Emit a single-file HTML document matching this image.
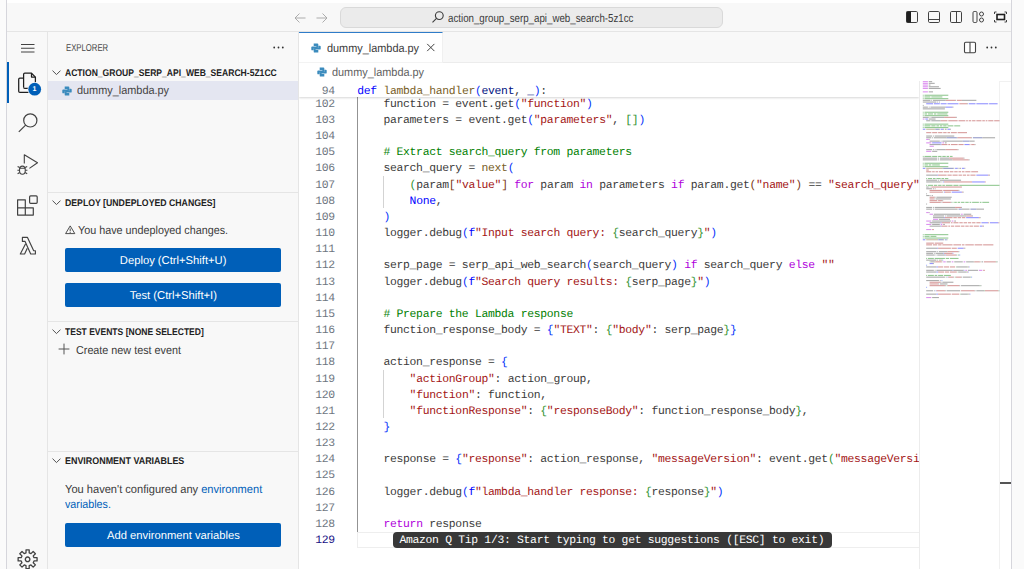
<!DOCTYPE html>
<html><head><meta charset="utf-8">
<style>
*{margin:0;padding:0;box-sizing:border-box}
html,body{width:1024px;height:569px;overflow:hidden;text-rendering:geometricPrecision;background:#f8f8f8;font-family:"Liberation Sans",sans-serif;color:#3b3b3b}
.a{position:absolute}
.t{position:absolute;white-space:pre;line-height:1}
.cl{position:absolute;left:357.3px;white-space:pre;font-family:"Liberation Mono",monospace;font-size:11.4px;letter-spacing:-0.3px;line-height:16.16px;height:16.16px;color:#3b3b3b}
.ln{position:absolute;left:300px;width:34.9px;text-align:right;white-space:pre;font-family:"Liberation Mono",monospace;font-size:11.4px;letter-spacing:-0.3px;line-height:16.16px}
.hdr{position:absolute;left:65.1px;font-weight:bold;font-size:9.7px;white-space:pre;line-height:1;transform-origin:0 0;color:#222}
.chev{position:absolute;left:52.3px;width:9px;height:5.4px;margin-top:-0.8px}
.btn{position:absolute;left:65.3px;width:216px;height:24px;background:#005fb8;border-radius:2px;color:#fff;font-size:11.4px;line-height:24px;text-align:center;white-space:pre}
.btn span{display:inline-block;transform:translateY(1.4px) scaleX(0.985)}
</style></head>
<body>
<!-- outer frame -->
<div class="a" style="left:0;top:0;width:6px;height:569px;background:#fbfbfb"></div>
<div class="a" style="left:6px;top:0;width:1px;height:569px;background:#d6d6dc"></div>
<div class="a" style="left:7px;top:0;width:1004px;height:3px;background:#ffffff"></div>
<div class="a" style="left:1011px;top:0;width:1px;height:569px;background:#d6d6dc"></div>
<div class="a" style="left:1012px;top:0;width:12px;height:569px;background:#fafafa"></div>

<!-- title bar -->
<div class="a" style="left:7px;top:3px;width:1004px;height:29.4px;background:#f8f8f8;border-bottom:1px solid #e5e5e5"></div>
<svg class="a" style="left:292px;top:11px" width="40" height="14" viewBox="0 0 40 14">
  <g fill="none" stroke="#a4a4a4" stroke-width="0.9">
    <path d="M3 7h10.5M3 7l4.5-4.5M3 7l4.5 4.5"/>
    <path d="M24.5 7h10.5M35 7l-4.5-4.5M35 7l-4.5 4.5"/>
  </g>
</svg>
<div class="a" style="left:339.6px;top:7.2px;width:383px;height:20.4px;background:#ebebeb;border:1px solid #d9d9d9;border-radius:6px"></div>
<svg class="a" style="left:431px;top:10px" width="14" height="14" viewBox="0 0 14 14">
  <g fill="none" stroke="#3b3b3b" stroke-width="1.1"><circle cx="8.3" cy="5.6" r="3.9"/><path d="M5.5 8.4L1.5 12.4"/></g>
</svg>
<div class="t" style="left:448px;top:12.7px;font-size:11.6px;color:#3b3b3b;transform:scaleX(0.839);transform-origin:0 0">action_group_serp_api_web_search-5z1cc</div>

<!-- layout icons -->
<svg class="a" style="left:904px;top:9.4px" width="106" height="16" viewBox="0 0 106 16">
  <g fill="none" stroke="#424242" stroke-width="1">
    <rect x="2.5" y="2.5" width="11" height="11" rx="1.2"/>
    <rect x="24.5" y="2.5" width="11" height="11" rx="1.2"/><path d="M24.5 10.5h11"/>
    <rect x="46.5" y="2.5" width="11" height="11" rx="1.2"/><path d="M52.5 2.5v11"/>
    <rect x="69" y="2.5" width="4" height="11" rx="1.2"/><circle cx="77.5" cy="5" r="2"/><circle cx="77.5" cy="11" r="2"/>
    <path d="M90.5 5V3h2M100.5 3h2v2M102.5 11v2h-2M92.5 13h-2v-2" />
  </g>
  <rect x="2.5" y="2.5" width="4.5" height="11" fill="#1f1f1f"/>
  <rect x="93" y="5.5" width="7.5" height="5" fill="none" stroke="#1f1f1f" stroke-width="1.6"/>
</svg>

<!-- activity bar -->
<div class="a" style="left:7px;top:32px;width:40px;height:537px;background:#f8f8f8"></div>
<div class="a" style="left:47px;top:32px;width:1px;height:537px;background:#e5e5e5"></div>
<div class="a" style="left:7px;top:62px;width:2px;height:41px;background:#005fb8"></div>
<svg class="a" style="left:7px;top:32px" width="40" height="537" viewBox="0 0 40 537">
  <g fill="none" stroke="#424242" stroke-width="1.1">
    <path d="M14 12.5h13.5M14 16.2h13.5M14 20h13.5"/>
  </g>
  <!-- files -->
  <g fill="none" stroke="#1f1f1f" stroke-width="1.25" stroke-linejoin="round">
    <path d="M16.6 55.2V42.4a1.2 1.2 0 0 1 1.2-1.2h6.7l3.9 3.9v10.5"/>
    <path d="M24.5 41.2v3.9h3.9"/>
    <path d="M16.6 46.1h-3.7a1.2 1.2 0 0 0-1.2 1.2v11.9a1.2 1.2 0 0 0 1.2 1.2h9.5"/>
    <path d="M16.6 55.2a1.2 1.2 0 0 0 1.2 1.2h4"/>
  </g>
  <circle cx="27.7" cy="57.2" r="7.2" fill="#f8f8f8"/>
  <circle cx="27.7" cy="57.2" r="6.4" fill="#005fb8"/>
  <!-- search -->
  <g fill="none" stroke="#424242" stroke-width="1.2">
    <circle cx="23.3" cy="88.4" r="6.6"/><path d="M18.6 93.1L11.8 99.9"/>
  </g>
  <!-- run debug -->
  <g fill="none" stroke="#424242" stroke-width="1.1" stroke-linejoin="round">
    <path d="M17.3 131.4V122.8L30.5 130.8L22.4 136.4"/>
    <ellipse cx="15.4" cy="138.2" rx="2.9" ry="4.1"/>
    <path d="M12.7 136.3H18.1M10.6 134.4L12.7 135.6M10.4 138.3H12.5M10.6 141.8L12.7 140.6M20.2 134.4L18.1 135.6M20.4 138.3H18.3M20.2 141.8L18.1 140.6"/>
  </g>
  <!-- extensions -->
  <g fill="none" stroke="#424242" stroke-width="1.2">
    <path d="M10.6 167.8h7.7v8h8v7.3H10.6z" stroke-linejoin="round"/>
    <path d="M10.6 175.8h7.7v7.3"/>
    <rect x="22.6" y="163.9" width="7.6" height="7.4" rx="1"/>
  </g>
  <!-- lambda -->
  <g fill="none" stroke="#424242" stroke-width="1.15" stroke-linejoin="round"><path d="M15.4 205.4H20.5L26.7 218.7H28.4V222H23.7L18.1 209.4H15.4Z"/><path d="M18.6 211.8L13.3 222H17.6L20.3 216.3"/></g>
  <!-- gear -->
  <g transform="translate(20.6 527.3)" fill="none" stroke="#424242" stroke-width="1.3" stroke-linejoin="round">
    <path d="M-1.59 -6.41 L-1.58 -9.47 L1.58 -9.47 L1.59 -6.41 L3.40 -5.65 L5.58 -7.81 L7.81 -5.58 L5.65 -3.40 L6.41 -1.59 L9.47 -1.58 L9.47 1.58 L6.41 1.59 L5.65 3.40 L7.81 5.58 L5.58 7.81 L3.40 5.65 L1.59 6.41 L1.58 9.47 L-1.58 9.47 L-1.59 6.41 L-3.40 5.65 L-5.58 7.81 L-7.81 5.58 L-5.65 3.40 L-6.41 1.59 L-9.47 1.58 L-9.47 -1.58 L-6.41 -1.59 L-5.65 -3.40 L-7.81 -5.58 L-5.58 -7.81 L-3.40 -5.65Z"/>
    <circle cx="0" cy="0" r="2.3"/>
  </g>
</svg>

<div class="t" style="left:32.4px;top:85.9px;font-size:7px;font-weight:bold;color:#fff">1</div>
<!-- sidebar -->
<div class="a" style="left:298px;top:32px;width:1px;height:537px;background:#e5e5e5"></div>
<div class="t" style="left:65.6px;top:44.1px;font-size:10px;transform:scaleX(0.775);transform-origin:0 0;color:#4a4a4a">EXPLORER</div>
<svg class="a" style="left:272px;top:45px" width="14" height="5"><g fill="#303030"><circle cx="2.2" cy="2.5" r="0.9"/><circle cx="6.5" cy="2.5" r="0.9"/><circle cx="10.8" cy="2.5" r="0.9"/></g></svg>
<svg class="chev" style="top:70.7px" viewBox="0 0 9 5.4"><path d="M0.5 0.6l4 4L8.5 0.6" fill="none" stroke="#505050" stroke-width="1"/></svg>
<div class="hdr" style="top:69.0px;transform:scaleX(0.884)">ACTION_GROUP_SERP_API_WEB_SEARCH-5Z1CC</div>
<div class="a" style="left:48px;top:80.8px;width:250px;height:19px;background:#e4e6f1"></div>
<svg class="a pyi" style="left:61.8px;top:85.6px" width="10" height="10" viewBox="0 0 10 10"><use href="#py"/></svg>
<div class="t" style="left:77.2px;top:85.0px;font-size:11.6px;transform:scaleX(0.94);transform-origin:0 0;color:#444">dummy_lambda.py</div>

<div class="a" style="left:48px;top:192px;width:250px;height:1px;background:#e5e5e5"></div>
<svg class="chev" style="top:200.7px" viewBox="0 0 9 5.4"><path d="M0.5 0.6l4 4L8.5 0.6" fill="none" stroke="#505050" stroke-width="1"/></svg>
<div class="hdr" style="top:198.8px;transform:scaleX(0.900)">DEPLOY [UNDEPLOYED CHANGES]</div>
<svg class="a" style="left:64.5px;top:225.2px" width="11" height="10" viewBox="0 0 11 10"><path d="M5.2 0.9L9.8 8.6H0.6z" fill="none" stroke="#3b3b3b" stroke-width="0.9" stroke-linejoin="round"/><path d="M5.2 3.5v2.8M5.2 7v0.9" stroke="#3b3b3b" stroke-width="0.9"/></svg>
<div class="t" style="left:78px;top:225.2px;font-size:11.6px;transform:scaleX(0.93);transform-origin:0 0">You have undeployed changes.</div>
<div class="btn" style="top:248px"><span>Deploy (Ctrl+Shift+U)</span></div>
<div class="btn" style="top:283px"><span>Test (Ctrl+Shift+I)</span></div>

<div class="a" style="left:48px;top:321px;width:250px;height:1px;background:#e5e5e5"></div>
<svg class="chev" style="top:330px" viewBox="0 0 9 5.4"><path d="M0.5 0.6l4 4L8.5 0.6" fill="none" stroke="#505050" stroke-width="1"/></svg>
<div class="hdr" style="top:327.9px;transform:scaleX(0.880)">TEST EVENTS [NONE SELECTED]</div>
<svg class="a" style="left:57.5px;top:343px" width="12" height="12" viewBox="0 0 12 12"><path d="M6 0.6v10.8M0.6 6h10.8" stroke="#555" stroke-width="1"/></svg>
<div class="t" style="left:76.4px;top:344.7px;font-size:11.6px;transform:scaleX(0.93);transform-origin:0 0">Create new test event</div>

<div class="a" style="left:48px;top:450.5px;width:250px;height:1px;background:#e5e5e5"></div>
<svg class="chev" style="top:459px" viewBox="0 0 9 5.4"><path d="M0.5 0.6l4 4L8.5 0.6" fill="none" stroke="#505050" stroke-width="1"/></svg>
<div class="hdr" style="top:456.9px;transform:scaleX(0.921)">ENVIRONMENT VARIABLES</div>
<div class="t" style="left:65.3px;top:483.6px;font-size:11.6px;transform:scaleX(0.957);transform-origin:0 0">You haven't configured any <span style="color:#005fb8">environment</span></div>
<div class="t" style="left:65.3px;top:498.8px;font-size:11.6px;transform:scaleX(0.925);transform-origin:0 0;color:#005fb8">variables.</div>
<div class="btn" style="top:522.5px"><span>Add environment variables</span></div>

<!-- editor -->
<div class="a" style="left:299px;top:32px;width:712px;height:537px;background:#ffffff"></div>
<div class="a" style="left:299px;top:32px;width:712px;height:30.8px;background:#f8f8f8;border-bottom:1px solid #ececec"></div>
<div class="a" style="left:299px;top:32.4px;width:143.5px;height:30.4px;background:#ffffff;border-top:1.6px solid #2f7cc9;border-right:1px solid #f0f0f0;border-bottom:1px solid #f3f3f3"></div>
<svg class="a" style="left:311px;top:43px" width="10" height="10" viewBox="0 0 10 10"><use href="#py"/></svg>
<div class="t" style="left:326.7px;top:42.8px;font-size:11.6px;transform:scaleX(0.94);transform-origin:0 0">dummy_lambda.py</div>
<svg class="a" style="left:426px;top:43px" width="10" height="9" viewBox="0 0 10 9"><path d="M1.2 0.9l7.2 7.2M8.4 0.9L1.2 8.1" stroke="#424242" stroke-width="1"/></svg>
<svg class="a" style="left:963px;top:41px" width="14" height="13" viewBox="0 0 14 13"><g fill="#fff" stroke="#424242" stroke-width="1.1"><rect x="1.5" y="1.2" width="11" height="10.6" rx="1.2"/><path d="M7 1.2v10.6"/></g></svg>
<svg class="a" style="left:985px;top:45px" width="14" height="5"><g fill="#303030"><circle cx="2.2" cy="2.5" r="0.9"/><circle cx="6.5" cy="2.5" r="0.9"/><circle cx="10.8" cy="2.5" r="0.9"/></g></svg>

<!-- breadcrumbs -->
<svg class="a" style="left:316.5px;top:67px" width="10" height="10" viewBox="0 0 10 10"><use href="#py"/></svg>
<div class="t" style="left:331.8px;top:67.1px;font-size:11.6px;transform:scaleX(0.94);transform-origin:0 0;color:#616161">dummy_lambda.py</div>

<!-- code area -->
<div class="a" style="left:299px;top:81px;width:620px;height:488px;overflow:hidden">
<div style="position:absolute;left:-299px;top:-81px;width:1024px;height:569px">
<!-- indent guides -->
<div class="a" style="left:357px;top:81px;width:1px;height:450.5px;background:#939393"></div>
<div class="a" style="left:383.3px;top:176px;width:1px;height:32.3px;background:#d3d3d3"></div>
<div class="a" style="left:383.3px;top:369.9px;width:1px;height:48.5px;background:#d3d3d3"></div>
<!-- current line -->
<div class="a" style="left:357px;top:532px;width:562px;height:15.5px;border-top:1.6px solid #eeeeee;border-bottom:1.6px solid #eeeeee;border-left:1.6px solid #eeeeee"></div>
<div class="ln" style="top:96.80px;color:#6e7681">102</div>
<div class="ln" style="top:112.96px;color:#6e7681">103</div>
<div class="ln" style="top:129.12px;color:#6e7681">104</div>
<div class="ln" style="top:145.28px;color:#6e7681">105</div>
<div class="ln" style="top:161.44px;color:#6e7681">106</div>
<div class="ln" style="top:177.60px;color:#6e7681">107</div>
<div class="ln" style="top:193.76px;color:#6e7681">108</div>
<div class="ln" style="top:209.92px;color:#6e7681">109</div>
<div class="ln" style="top:226.08px;color:#6e7681">110</div>
<div class="ln" style="top:242.24px;color:#6e7681">111</div>
<div class="ln" style="top:258.40px;color:#6e7681">112</div>
<div class="ln" style="top:274.56px;color:#6e7681">113</div>
<div class="ln" style="top:290.72px;color:#6e7681">114</div>
<div class="ln" style="top:306.88px;color:#6e7681">115</div>
<div class="ln" style="top:323.04px;color:#6e7681">116</div>
<div class="ln" style="top:339.20px;color:#6e7681">117</div>
<div class="ln" style="top:355.36px;color:#6e7681">118</div>
<div class="ln" style="top:371.52px;color:#6e7681">119</div>
<div class="ln" style="top:387.68px;color:#6e7681">120</div>
<div class="ln" style="top:403.84px;color:#6e7681">121</div>
<div class="ln" style="top:420.00px;color:#6e7681">122</div>
<div class="ln" style="top:436.16px;color:#6e7681">123</div>
<div class="ln" style="top:452.32px;color:#6e7681">124</div>
<div class="ln" style="top:468.48px;color:#6e7681">125</div>
<div class="ln" style="top:484.64px;color:#6e7681">126</div>
<div class="ln" style="top:500.80px;color:#6e7681">127</div>
<div class="ln" style="top:516.96px;color:#6e7681">128</div>
<div class="ln" style="top:533.12px;color:#171184">129</div>
<div class="cl" style="top:96.80px"><span style="color:#3b3b3b">    function = event.get</span><span style="color:#0431fa">(</span><span style="color:#a31515">&quot;function&quot;</span><span style="color:#0431fa">)</span></div>
<div class="cl" style="top:112.96px"><span style="color:#3b3b3b">    parameters = event.get</span><span style="color:#0431fa">(</span><span style="color:#a31515">&quot;parameters&quot;</span><span style="color:#3b3b3b">, </span><span style="color:#319331">[]</span><span style="color:#0431fa">)</span></div>
<div class="cl" style="top:129.12px"></div>
<div class="cl" style="top:145.28px"><span style="color:#008000">    # Extract search_query from parameters</span></div>
<div class="cl" style="top:161.44px"><span style="color:#3b3b3b">    search_query = </span><span style="color:#795e26">next</span><span style="color:#0431fa">(</span></div>
<div class="cl" style="top:177.60px"><span style="color:#3b3b3b">        </span><span style="color:#319331">(</span><span style="color:#3b3b3b">param</span><span style="color:#7b3814">[</span><span style="color:#a31515">&quot;value&quot;</span><span style="color:#7b3814">]</span><span style="color:#3b3b3b"> </span><span style="color:#af00db">for</span><span style="color:#3b3b3b"> param </span><span style="color:#af00db">in</span><span style="color:#3b3b3b"> parameters </span><span style="color:#af00db">if</span><span style="color:#3b3b3b"> param.get</span><span style="color:#7b3814">(</span><span style="color:#a31515">&quot;name&quot;</span><span style="color:#7b3814">)</span><span style="color:#3b3b3b"> == </span><span style="color:#a31515">&quot;search_query&quot;</span><span style="color:#319331">)</span><span style="color:#3b3b3b">,</span></div>
<div class="cl" style="top:193.76px"><span style="color:#3b3b3b">        </span><span style="color:#0000ff">None</span><span style="color:#3b3b3b">,</span></div>
<div class="cl" style="top:209.92px"><span style="color:#3b3b3b">    </span><span style="color:#0431fa">)</span></div>
<div class="cl" style="top:226.08px"><span style="color:#3b3b3b">    logger.debug</span><span style="color:#0431fa">(</span><span style="color:#0000ff">f</span><span style="color:#a31515">&quot;Input search query: </span><span style="color:#319331">{</span><span style="color:#3b3b3b">search_query</span><span style="color:#319331">}</span><span style="color:#a31515">&quot;</span><span style="color:#0431fa">)</span></div>
<div class="cl" style="top:242.24px"></div>
<div class="cl" style="top:258.40px"><span style="color:#3b3b3b">    serp_page = serp_api_web_search</span><span style="color:#0431fa">(</span><span style="color:#3b3b3b">search_query</span><span style="color:#0431fa">)</span><span style="color:#3b3b3b"> </span><span style="color:#af00db">if</span><span style="color:#3b3b3b"> search_query </span><span style="color:#af00db">else</span><span style="color:#3b3b3b"> </span><span style="color:#a31515">&quot;&quot;</span></div>
<div class="cl" style="top:274.56px"><span style="color:#3b3b3b">    logger.debug</span><span style="color:#0431fa">(</span><span style="color:#0000ff">f</span><span style="color:#a31515">&quot;Search query results: </span><span style="color:#319331">{</span><span style="color:#3b3b3b">serp_page</span><span style="color:#319331">}</span><span style="color:#a31515">&quot;</span><span style="color:#0431fa">)</span></div>
<div class="cl" style="top:290.72px"></div>
<div class="cl" style="top:306.88px"><span style="color:#008000">    # Prepare the Lambda response</span></div>
<div class="cl" style="top:323.04px"><span style="color:#3b3b3b">    function_response_body = </span><span style="color:#0431fa">{</span><span style="color:#a31515">&quot;TEXT&quot;</span><span style="color:#3b3b3b">: </span><span style="color:#319331">{</span><span style="color:#a31515">&quot;body&quot;</span><span style="color:#3b3b3b">: serp_page</span><span style="color:#319331">}</span><span style="color:#0431fa">}</span></div>
<div class="cl" style="top:339.20px"></div>
<div class="cl" style="top:355.36px"><span style="color:#3b3b3b">    action_response = </span><span style="color:#0431fa">{</span></div>
<div class="cl" style="top:371.52px"><span style="color:#3b3b3b">        </span><span style="color:#a31515">&quot;actionGroup&quot;</span><span style="color:#3b3b3b">: action_group,</span></div>
<div class="cl" style="top:387.68px"><span style="color:#3b3b3b">        </span><span style="color:#a31515">&quot;function&quot;</span><span style="color:#3b3b3b">: function,</span></div>
<div class="cl" style="top:403.84px"><span style="color:#3b3b3b">        </span><span style="color:#a31515">&quot;functionResponse&quot;</span><span style="color:#3b3b3b">: </span><span style="color:#319331">{</span><span style="color:#a31515">&quot;responseBody&quot;</span><span style="color:#3b3b3b">: function_response_body</span><span style="color:#319331">}</span><span style="color:#3b3b3b">,</span></div>
<div class="cl" style="top:420.00px"><span style="color:#3b3b3b">    </span><span style="color:#0431fa">}</span></div>
<div class="cl" style="top:436.16px"></div>
<div class="cl" style="top:452.32px"><span style="color:#3b3b3b">    response = </span><span style="color:#0431fa">{</span><span style="color:#a31515">&quot;response&quot;</span><span style="color:#3b3b3b">: action_response, </span><span style="color:#a31515">&quot;messageVersion&quot;</span><span style="color:#3b3b3b">: event.get</span><span style="color:#319331">(</span><span style="color:#a31515">&quot;messageVersion&quot;</span><span style="color:#319331">)</span><span style="color:#0431fa">}</span></div>
<div class="cl" style="top:468.48px"></div>
<div class="cl" style="top:484.64px"><span style="color:#3b3b3b">    logger.debug</span><span style="color:#0431fa">(</span><span style="color:#0000ff">f</span><span style="color:#a31515">&quot;lambda_handler response: </span><span style="color:#319331">{</span><span style="color:#3b3b3b">response</span><span style="color:#319331">}</span><span style="color:#a31515">&quot;</span><span style="color:#0431fa">)</span></div>
<div class="cl" style="top:500.80px"></div>
<div class="cl" style="top:516.96px"><span style="color:#3b3b3b">    </span><span style="color:#af00db">return</span><span style="color:#3b3b3b"> response</span></div>
<div class="cl" style="top:533.12px"></div>
<!-- sticky -->
<div class="a" style="left:299px;top:81px;width:620px;height:15.8px;background:#fff;box-shadow:0 1px 2px rgba(0,0,0,0.16)"></div>
<div class="ln" style="top:83.8px;color:#6e7681">94</div>
<div class="cl" style="top:83.6px"><span style="color:#0000ff">def</span> <span style="color:#795e26">lambda_handler</span><span style="color:#0431fa">(</span><span style="color:#001080">event</span>, <span style="color:#001080">_</span><span style="color:#0431fa">)</span>:</div>
<!-- amazon q tip -->
<div class="a" style="left:392.7px;top:531.7px;width:439px;height:16px;background:#383838;border-radius:4px"></div>
<div class="cl" style="left:399.4px;top:533px;color:#ffffff">Amazon Q Tip 1/3: Start typing to get suggestions ([ESC] to exit)</div>
</div>
</div>

<!-- minimap -->
<div class="a" style="left:918.5px;top:81px;width:1px;height:488px;background:#ececec"></div>
<div class="a" style="left:999.4px;top:81px;width:12px;height:488px;border-left:1px solid #f1f1f1;border-top:1px solid #f1f1f1"></div>
<div class="a" style="left:1000px;top:482px;width:11px;height:2px;background:#555"></div>
<svg class="a" style="left:0;top:0" width="1024" height="569" viewBox="0 0 1024 569"><g opacity="0.42"><rect x="922.80" y="81.10" width="5.10" height="1.1" fill="#af00db"/><rect x="928.75" y="81.10" width="3.40" height="1.1" fill="#3b3b3b"/><rect x="922.80" y="82.80" width="5.10" height="1.1" fill="#af00db"/><rect x="928.75" y="82.80" width="5.95" height="1.1" fill="#3b3b3b"/><rect x="922.80" y="84.50" width="5.10" height="1.1" fill="#af00db"/><rect x="928.75" y="84.50" width="1.70" height="1.1" fill="#3b3b3b"/><rect x="922.80" y="86.20" width="5.10" height="1.1" fill="#af00db"/><rect x="928.75" y="86.20" width="10.20" height="1.1" fill="#3b3b3b"/><rect x="922.80" y="87.90" width="5.10" height="1.1" fill="#af00db"/><rect x="928.75" y="87.90" width="11.90" height="1.1" fill="#3b3b3b"/><rect x="922.80" y="91.30" width="5.10" height="1.1" fill="#af00db"/><rect x="928.75" y="91.30" width="4.25" height="1.1" fill="#3b3b3b"/><rect x="922.80" y="94.70" width="0.85" height="1.1" fill="#008000"/><rect x="924.50" y="94.70" width="23.80" height="1.1" fill="#008000"/><rect x="922.80" y="96.40" width="0.85" height="1.1" fill="#008000"/><rect x="924.50" y="96.40" width="5.95" height="1.1" fill="#008000"/><rect x="931.30" y="96.40" width="11.05" height="1.1" fill="#008000"/><rect x="922.80" y="98.10" width="0.85" height="1.1" fill="#008000"/><rect x="924.50" y="98.10" width="23.80" height="1.1" fill="#008000"/><rect x="922.80" y="99.80" width="7.65" height="1.1" fill="#3b3b3b"/><rect x="931.30" y="99.80" width="0.85" height="1.1" fill="#3b3b3b"/><rect x="933.00" y="99.80" width="12.75" height="1.1" fill="#3b3b3b"/><rect x="945.75" y="99.80" width="9.35" height="1.1" fill="#a31515"/><rect x="955.10" y="99.80" width="0.85" height="1.1" fill="#3b3b3b"/><rect x="956.80" y="99.80" width="5.10" height="1.1" fill="#a31515"/><rect x="961.90" y="99.80" width="14.45" height="1.1" fill="#3b3b3b"/><rect x="922.80" y="101.50" width="13.60" height="1.1" fill="#3b3b3b"/><rect x="937.25" y="101.50" width="0.85" height="1.1" fill="#3b3b3b"/><rect x="938.95" y="101.50" width="0.85" height="1.1" fill="#3b3b3b"/><rect x="926.20" y="103.20" width="6.80" height="1.1" fill="#0000ff"/><rect x="933.85" y="103.20" width="5.95" height="1.1" fill="#0000ff"/><rect x="940.65" y="103.20" width="5.95" height="1.1" fill="#0000ff"/><rect x="947.45" y="103.20" width="11.05" height="1.1" fill="#0000ff"/><rect x="959.35" y="103.20" width="7.65" height="1.1" fill="#a31515"/><rect x="967.00" y="103.20" width="0.85" height="1.1" fill="#3b3b3b"/><rect x="968.70" y="103.20" width="6.80" height="1.1" fill="#0000ff"/><rect x="976.35" y="103.20" width="11.90" height="1.1" fill="#0000ff"/><rect x="989.10" y="103.20" width="8.50" height="1.1" fill="#0000ff"/><rect x="922.80" y="104.90" width="0.85" height="1.1" fill="#3b3b3b"/><rect x="922.80" y="106.60" width="5.10" height="1.1" fill="#3b3b3b"/><rect x="928.75" y="106.60" width="0.85" height="1.1" fill="#3b3b3b"/><rect x="930.45" y="106.60" width="15.30" height="1.1" fill="#3b3b3b"/><rect x="945.75" y="106.60" width="6.80" height="1.1" fill="#0000ff"/><rect x="952.55" y="106.60" width="0.85" height="1.1" fill="#3b3b3b"/><rect x="922.80" y="108.30" width="22.10" height="1.1" fill="#3b3b3b"/><rect x="922.80" y="111.70" width="0.85" height="1.1" fill="#008000"/><rect x="924.50" y="111.70" width="23.80" height="1.1" fill="#008000"/><rect x="922.80" y="113.40" width="0.85" height="1.1" fill="#008000"/><rect x="924.50" y="113.40" width="2.55" height="1.1" fill="#008000"/><rect x="927.90" y="113.40" width="5.10" height="1.1" fill="#008000"/><rect x="933.85" y="113.40" width="2.55" height="1.1" fill="#008000"/><rect x="937.25" y="113.40" width="10.20" height="1.1" fill="#008000"/><rect x="922.80" y="115.10" width="0.85" height="1.1" fill="#008000"/><rect x="924.50" y="115.10" width="23.80" height="1.1" fill="#008000"/><rect x="922.80" y="116.80" width="5.95" height="1.1" fill="#3b3b3b"/><rect x="929.60" y="116.80" width="0.85" height="1.1" fill="#3b3b3b"/><rect x="931.30" y="116.80" width="12.75" height="1.1" fill="#3b3b3b"/><rect x="944.05" y="116.80" width="11.90" height="1.1" fill="#a31515"/><rect x="955.95" y="116.80" width="0.85" height="1.1" fill="#3b3b3b"/><rect x="922.80" y="118.50" width="1.70" height="1.1" fill="#af00db"/><rect x="925.35" y="118.50" width="2.55" height="1.1" fill="#0000ff"/><rect x="928.75" y="118.50" width="6.80" height="1.1" fill="#3b3b3b"/><rect x="926.20" y="120.20" width="4.25" height="1.1" fill="#3b3b3b"/><rect x="931.30" y="120.20" width="9.35" height="1.1" fill="#3b3b3b"/><rect x="940.65" y="120.20" width="6.80" height="1.1" fill="#a31515"/><rect x="948.30" y="120.20" width="9.35" height="1.1" fill="#a31515"/><rect x="958.50" y="120.20" width="6.80" height="1.1" fill="#a31515"/><rect x="966.15" y="120.20" width="1.70" height="1.1" fill="#a31515"/><rect x="968.70" y="120.20" width="2.55" height="1.1" fill="#a31515"/><rect x="972.10" y="120.20" width="3.40" height="1.1" fill="#a31515"/><rect x="976.35" y="120.20" width="5.10" height="1.1" fill="#a31515"/><rect x="982.30" y="120.20" width="2.55" height="1.1" fill="#a31515"/><rect x="985.70" y="120.20" width="1.70" height="1.1" fill="#a31515"/><rect x="988.25" y="120.20" width="5.10" height="1.1" fill="#a31515"/><rect x="994.20" y="120.20" width="5.30" height="1.1" fill="#a31515"/><rect x="922.80" y="123.60" width="0.85" height="1.1" fill="#008000"/><rect x="924.50" y="123.60" width="23.80" height="1.1" fill="#008000"/><rect x="922.80" y="125.30" width="0.85" height="1.1" fill="#008000"/><rect x="924.50" y="125.30" width="5.95" height="1.1" fill="#008000"/><rect x="931.30" y="125.30" width="4.25" height="1.1" fill="#008000"/><rect x="936.40" y="125.30" width="2.55" height="1.1" fill="#008000"/><rect x="939.80" y="125.30" width="2.55" height="1.1" fill="#008000"/><rect x="943.20" y="125.30" width="3.40" height="1.1" fill="#008000"/><rect x="947.45" y="125.30" width="5.95" height="1.1" fill="#008000"/><rect x="954.25" y="125.30" width="5.95" height="1.1" fill="#008000"/><rect x="922.80" y="127.00" width="0.85" height="1.1" fill="#008000"/><rect x="924.50" y="127.00" width="23.80" height="1.1" fill="#008000"/><rect x="922.80" y="128.70" width="2.55" height="1.1" fill="#0000ff"/><rect x="926.20" y="128.70" width="8.50" height="1.1" fill="#795e26"/><rect x="934.70" y="128.70" width="0.85" height="1.1" fill="#3b3b3b"/><rect x="935.55" y="128.70" width="3.40" height="1.1" fill="#001080"/><rect x="938.95" y="128.70" width="0.85" height="1.1" fill="#3b3b3b"/><rect x="940.65" y="128.70" width="2.55" height="1.1" fill="#0000ff"/><rect x="943.20" y="128.70" width="0.85" height="1.1" fill="#3b3b3b"/><rect x="944.90" y="128.70" width="1.70" height="1.1" fill="#3b3b3b"/><rect x="947.45" y="128.70" width="2.55" height="1.1" fill="#0000ff"/><rect x="950.00" y="128.70" width="0.85" height="1.1" fill="#3b3b3b"/><rect x="926.20" y="132.10" width="5.10" height="1.1" fill="#a31515"/><rect x="932.15" y="132.10" width="5.10" height="1.1" fill="#a31515"/><rect x="938.10" y="132.10" width="4.25" height="1.1" fill="#a31515"/><rect x="943.20" y="132.10" width="3.40" height="1.1" fill="#a31515"/><rect x="947.45" y="132.10" width="2.55" height="1.1" fill="#a31515"/><rect x="950.85" y="132.10" width="5.95" height="1.1" fill="#a31515"/><rect x="957.65" y="132.10" width="9.35" height="1.1" fill="#a31515"/><rect x="926.20" y="135.50" width="5.95" height="1.1" fill="#3b3b3b"/><rect x="933.00" y="135.50" width="0.85" height="1.1" fill="#3b3b3b"/><rect x="934.70" y="135.50" width="19.55" height="1.1" fill="#3b3b3b"/><rect x="926.20" y="137.20" width="5.10" height="1.1" fill="#3b3b3b"/><rect x="932.15" y="137.20" width="0.85" height="1.1" fill="#3b3b3b"/><rect x="933.85" y="137.20" width="12.75" height="1.1" fill="#3b3b3b"/><rect x="946.60" y="137.20" width="10.20" height="1.1" fill="#001080"/><rect x="956.80" y="137.20" width="0.85" height="1.1" fill="#3b3b3b"/><rect x="957.65" y="137.20" width="13.60" height="1.1" fill="#a31515"/><rect x="971.25" y="137.20" width="0.85" height="1.1" fill="#3b3b3b"/><rect x="972.95" y="137.20" width="9.35" height="1.1" fill="#001080"/><rect x="982.30" y="137.20" width="12.75" height="1.1" fill="#3b3b3b"/><rect x="926.20" y="138.90" width="2.55" height="1.1" fill="#af00db"/><rect x="928.75" y="138.90" width="0.85" height="1.1" fill="#3b3b3b"/><rect x="929.60" y="140.60" width="10.20" height="1.1" fill="#3b3b3b"/><rect x="940.65" y="140.60" width="0.85" height="1.1" fill="#3b3b3b"/><rect x="942.35" y="140.60" width="20.40" height="1.1" fill="#3b3b3b"/><rect x="962.75" y="140.60" width="6.80" height="1.1" fill="#001080"/><rect x="969.55" y="140.60" width="5.10" height="1.1" fill="#3b3b3b"/><rect x="926.20" y="142.30" width="5.10" height="1.1" fill="#af00db"/><rect x="932.15" y="142.30" width="9.35" height="1.1" fill="#0000ff"/><rect x="942.35" y="142.30" width="1.70" height="1.1" fill="#af00db"/><rect x="944.90" y="142.30" width="1.70" height="1.1" fill="#3b3b3b"/><rect x="929.60" y="144.00" width="11.05" height="1.1" fill="#3b3b3b"/><rect x="940.65" y="144.00" width="0.85" height="1.1" fill="#0000ff"/><rect x="941.50" y="144.00" width="5.95" height="1.1" fill="#a31515"/><rect x="948.30" y="144.00" width="1.70" height="1.1" fill="#a31515"/><rect x="950.85" y="144.00" width="6.80" height="1.1" fill="#a31515"/><rect x="958.50" y="144.00" width="5.10" height="1.1" fill="#a31515"/><rect x="964.45" y="144.00" width="5.10" height="1.1" fill="#0000ff"/><rect x="969.55" y="144.00" width="0.85" height="1.1" fill="#a31515"/><rect x="971.25" y="144.00" width="3.40" height="1.1" fill="#a31515"/><rect x="974.65" y="144.00" width="0.85" height="1.1" fill="#3b3b3b"/><rect x="929.60" y="145.70" width="4.25" height="1.1" fill="#af00db"/><rect x="926.20" y="149.10" width="5.95" height="1.1" fill="#3b3b3b"/><rect x="933.00" y="149.10" width="0.85" height="1.1" fill="#3b3b3b"/><rect x="934.70" y="149.10" width="0.85" height="1.1" fill="#3b3b3b"/><rect x="936.40" y="149.10" width="9.35" height="1.1" fill="#3b3b3b"/><rect x="945.75" y="149.10" width="11.90" height="1.1" fill="#a31515"/><rect x="957.65" y="149.10" width="0.85" height="1.1" fill="#3b3b3b"/><rect x="926.20" y="150.80" width="5.10" height="1.1" fill="#af00db"/><rect x="932.15" y="150.80" width="5.10" height="1.1" fill="#3b3b3b"/><rect x="922.80" y="155.90" width="0.85" height="1.1" fill="#008000"/><rect x="924.50" y="155.90" width="6.80" height="1.1" fill="#008000"/><rect x="932.15" y="155.90" width="5.10" height="1.1" fill="#008000"/><rect x="938.10" y="155.90" width="3.40" height="1.1" fill="#008000"/><rect x="942.35" y="155.90" width="3.40" height="1.1" fill="#008000"/><rect x="946.60" y="155.90" width="2.55" height="1.1" fill="#008000"/><rect x="950.00" y="155.90" width="2.55" height="1.1" fill="#008000"/><rect x="922.80" y="157.60" width="14.45" height="1.1" fill="#3b3b3b"/><rect x="938.10" y="157.60" width="0.85" height="1.1" fill="#3b3b3b"/><rect x="939.80" y="157.60" width="9.35" height="1.1" fill="#3b3b3b"/><rect x="949.15" y="157.60" width="14.45" height="1.1" fill="#a31515"/><rect x="963.60" y="157.60" width="0.85" height="1.1" fill="#3b3b3b"/><rect x="922.80" y="159.30" width="14.45" height="1.1" fill="#3b3b3b"/><rect x="938.10" y="159.30" width="0.85" height="1.1" fill="#3b3b3b"/><rect x="939.80" y="159.30" width="12.75" height="1.1" fill="#3b3b3b"/><rect x="952.55" y="159.30" width="16.15" height="1.1" fill="#a31515"/><rect x="968.70" y="159.30" width="0.85" height="1.1" fill="#3b3b3b"/><rect x="922.80" y="162.70" width="0.85" height="1.1" fill="#008000"/><rect x="924.50" y="162.70" width="23.80" height="1.1" fill="#008000"/><rect x="922.80" y="164.40" width="0.85" height="1.1" fill="#008000"/><rect x="924.50" y="164.40" width="3.40" height="1.1" fill="#008000"/><rect x="928.75" y="164.40" width="2.55" height="1.1" fill="#008000"/><rect x="932.15" y="164.40" width="7.65" height="1.1" fill="#008000"/><rect x="922.80" y="166.10" width="0.85" height="1.1" fill="#008000"/><rect x="924.50" y="166.10" width="23.80" height="1.1" fill="#008000"/><rect x="922.80" y="167.80" width="2.55" height="1.1" fill="#0000ff"/><rect x="926.20" y="167.80" width="16.15" height="1.1" fill="#795e26"/><rect x="942.35" y="167.80" width="0.85" height="1.1" fill="#3b3b3b"/><rect x="943.20" y="167.80" width="10.20" height="1.1" fill="#001080"/><rect x="953.40" y="167.80" width="0.85" height="1.1" fill="#3b3b3b"/><rect x="955.10" y="167.80" width="2.55" height="1.1" fill="#0000ff"/><rect x="957.65" y="167.80" width="0.85" height="1.1" fill="#3b3b3b"/><rect x="959.35" y="167.80" width="1.70" height="1.1" fill="#3b3b3b"/><rect x="961.90" y="167.80" width="2.55" height="1.1" fill="#0000ff"/><rect x="964.45" y="167.80" width="0.85" height="1.1" fill="#3b3b3b"/><rect x="926.20" y="169.50" width="2.55" height="1.1" fill="#a31515"/><rect x="926.20" y="171.20" width="5.10" height="1.1" fill="#a31515"/><rect x="932.15" y="171.20" width="2.55" height="1.1" fill="#a31515"/><rect x="935.55" y="171.20" width="2.55" height="1.1" fill="#a31515"/><rect x="938.95" y="171.20" width="4.25" height="1.1" fill="#a31515"/><rect x="944.05" y="171.20" width="5.10" height="1.1" fill="#a31515"/><rect x="950.00" y="171.20" width="3.40" height="1.1" fill="#a31515"/><rect x="954.25" y="171.20" width="3.40" height="1.1" fill="#a31515"/><rect x="958.50" y="171.20" width="2.55" height="1.1" fill="#a31515"/><rect x="961.90" y="171.20" width="2.55" height="1.1" fill="#a31515"/><rect x="965.30" y="171.20" width="5.10" height="1.1" fill="#a31515"/><rect x="971.25" y="171.20" width="6.80" height="1.1" fill="#a31515"/><rect x="926.20" y="174.60" width="11.05" height="1.1" fill="#3b3b3b"/><rect x="937.25" y="174.60" width="0.85" height="1.1" fill="#0000ff"/><rect x="938.10" y="174.60" width="8.50" height="1.1" fill="#a31515"/><rect x="947.45" y="174.60" width="4.25" height="1.1" fill="#a31515"/><rect x="952.55" y="174.60" width="5.10" height="1.1" fill="#a31515"/><rect x="958.50" y="174.60" width="3.40" height="1.1" fill="#a31515"/><rect x="962.75" y="174.60" width="3.40" height="1.1" fill="#a31515"/><rect x="967.00" y="174.60" width="2.55" height="1.1" fill="#a31515"/><rect x="970.40" y="174.60" width="5.10" height="1.1" fill="#a31515"/><rect x="976.35" y="174.60" width="11.90" height="1.1" fill="#0000ff"/><rect x="988.25" y="174.60" width="0.85" height="1.1" fill="#a31515"/><rect x="989.10" y="174.60" width="0.85" height="1.1" fill="#3b3b3b"/><rect x="926.20" y="178.00" width="0.85" height="1.1" fill="#008000"/><rect x="927.90" y="178.00" width="4.25" height="1.1" fill="#008000"/><rect x="933.00" y="178.00" width="2.55" height="1.1" fill="#008000"/><rect x="936.40" y="178.00" width="4.25" height="1.1" fill="#008000"/><rect x="941.50" y="178.00" width="2.55" height="1.1" fill="#008000"/><rect x="944.90" y="178.00" width="3.40" height="1.1" fill="#008000"/><rect x="926.20" y="179.70" width="11.05" height="1.1" fill="#3b3b3b"/><rect x="938.10" y="179.70" width="0.85" height="1.1" fill="#3b3b3b"/><rect x="939.80" y="179.70" width="21.25" height="1.1" fill="#3b3b3b"/><rect x="926.20" y="181.40" width="14.45" height="1.1" fill="#3b3b3b"/><rect x="941.50" y="181.40" width="0.85" height="1.1" fill="#3b3b3b"/><rect x="943.20" y="181.40" width="0.85" height="1.1" fill="#0000ff"/><rect x="944.05" y="181.40" width="28.05" height="1.1" fill="#a31515"/><rect x="972.10" y="181.40" width="12.75" height="1.1" fill="#0000ff"/><rect x="984.85" y="181.40" width="0.85" height="1.1" fill="#a31515"/><rect x="926.20" y="184.80" width="0.85" height="1.1" fill="#008000"/><rect x="927.90" y="184.80" width="5.10" height="1.1" fill="#008000"/><rect x="933.85" y="184.80" width="3.40" height="1.1" fill="#008000"/><rect x="938.10" y="184.80" width="3.40" height="1.1" fill="#008000"/><rect x="942.35" y="184.80" width="2.55" height="1.1" fill="#008000"/><rect x="945.75" y="184.80" width="6.80" height="1.1" fill="#008000"/><rect x="953.40" y="184.80" width="5.10" height="1.1" fill="#008000"/><rect x="959.35" y="184.80" width="40.15" height="1.1" fill="#008000"/><rect x="926.20" y="186.50" width="2.55" height="1.1" fill="#3b3b3b"/><rect x="929.60" y="186.50" width="0.85" height="1.1" fill="#3b3b3b"/><rect x="931.30" y="186.50" width="30.60" height="1.1" fill="#a31515"/><rect x="926.20" y="188.20" width="5.95" height="1.1" fill="#3b3b3b"/><rect x="933.00" y="188.20" width="0.85" height="1.1" fill="#3b3b3b"/><rect x="934.70" y="188.20" width="0.85" height="1.1" fill="#3b3b3b"/><rect x="929.60" y="189.90" width="12.75" height="1.1" fill="#a31515"/><rect x="943.20" y="189.90" width="15.30" height="1.1" fill="#a31515"/><rect x="958.50" y="189.90" width="0.85" height="1.1" fill="#3b3b3b"/><rect x="929.60" y="191.60" width="12.75" height="1.1" fill="#a31515"/><rect x="942.35" y="191.60" width="0.85" height="1.1" fill="#3b3b3b"/><rect x="944.05" y="191.60" width="0.85" height="1.1" fill="#0000ff"/><rect x="944.90" y="191.60" width="5.95" height="1.1" fill="#a31515"/><rect x="951.70" y="191.60" width="10.20" height="1.1" fill="#0000ff"/><rect x="961.90" y="191.60" width="0.85" height="1.1" fill="#a31515"/><rect x="962.75" y="191.60" width="0.85" height="1.1" fill="#3b3b3b"/><rect x="926.20" y="193.30" width="0.85" height="1.1" fill="#3b3b3b"/><rect x="926.20" y="195.00" width="3.40" height="1.1" fill="#3b3b3b"/><rect x="930.45" y="195.00" width="0.85" height="1.1" fill="#3b3b3b"/><rect x="932.15" y="195.00" width="0.85" height="1.1" fill="#3b3b3b"/><rect x="929.60" y="196.70" width="5.10" height="1.1" fill="#a31515"/><rect x="934.70" y="196.70" width="0.85" height="1.1" fill="#3b3b3b"/><rect x="936.40" y="196.70" width="15.30" height="1.1" fill="#3b3b3b"/><rect x="929.60" y="198.40" width="4.25" height="1.1" fill="#a31515"/><rect x="933.85" y="198.40" width="0.85" height="1.1" fill="#3b3b3b"/><rect x="935.55" y="198.40" width="15.30" height="1.1" fill="#3b3b3b"/><rect x="929.60" y="200.10" width="7.65" height="1.1" fill="#a31515"/><rect x="938.10" y="200.10" width="4.25" height="1.1" fill="#a31515"/><rect x="942.35" y="200.10" width="0.85" height="1.1" fill="#3b3b3b"/><rect x="929.60" y="201.80" width="11.05" height="1.1" fill="#a31515"/><rect x="940.65" y="201.80" width="0.85" height="1.1" fill="#3b3b3b"/><rect x="942.35" y="201.80" width="8.50" height="1.1" fill="#a31515"/><rect x="950.85" y="201.80" width="0.85" height="1.1" fill="#3b3b3b"/><rect x="952.55" y="201.80" width="0.85" height="1.1" fill="#008000"/><rect x="954.25" y="201.80" width="2.55" height="1.1" fill="#008000"/><rect x="957.65" y="201.80" width="2.55" height="1.1" fill="#008000"/><rect x="961.05" y="201.80" width="3.40" height="1.1" fill="#008000"/><rect x="965.30" y="201.80" width="3.40" height="1.1" fill="#008000"/><rect x="969.55" y="201.80" width="1.70" height="1.1" fill="#008000"/><rect x="972.10" y="201.80" width="6.80" height="1.1" fill="#008000"/><rect x="979.75" y="201.80" width="1.70" height="1.1" fill="#008000"/><rect x="982.30" y="201.80" width="6.80" height="1.1" fill="#008000"/><rect x="926.20" y="203.50" width="0.85" height="1.1" fill="#3b3b3b"/><rect x="926.20" y="206.90" width="5.95" height="1.1" fill="#3b3b3b"/><rect x="933.00" y="206.90" width="0.85" height="1.1" fill="#3b3b3b"/><rect x="934.70" y="206.90" width="20.40" height="1.1" fill="#3b3b3b"/><rect x="955.10" y="206.90" width="5.95" height="1.1" fill="#a31515"/><rect x="961.05" y="206.90" width="0.85" height="1.1" fill="#3b3b3b"/><rect x="926.20" y="208.60" width="5.95" height="1.1" fill="#3b3b3b"/><rect x="933.00" y="208.60" width="0.85" height="1.1" fill="#3b3b3b"/><rect x="934.70" y="208.60" width="22.95" height="1.1" fill="#3b3b3b"/><rect x="958.50" y="208.60" width="3.40" height="1.1" fill="#001080"/><rect x="961.90" y="208.60" width="7.65" height="1.1" fill="#3b3b3b"/><rect x="970.40" y="208.60" width="5.95" height="1.1" fill="#001080"/><rect x="976.35" y="208.60" width="7.65" height="1.1" fill="#3b3b3b"/><rect x="926.20" y="212.00" width="2.55" height="1.1" fill="#af00db"/><rect x="928.75" y="212.00" width="0.85" height="1.1" fill="#3b3b3b"/><rect x="929.60" y="213.70" width="3.40" height="1.1" fill="#af00db"/><rect x="933.85" y="213.70" width="26.35" height="1.1" fill="#3b3b3b"/><rect x="961.05" y="213.70" width="1.70" height="1.1" fill="#af00db"/><rect x="963.60" y="213.70" width="7.65" height="1.1" fill="#3b3b3b"/><rect x="933.00" y="215.40" width="11.05" height="1.1" fill="#3b3b3b"/><rect x="944.90" y="215.40" width="0.85" height="1.1" fill="#3b3b3b"/><rect x="946.60" y="215.40" width="19.55" height="1.1" fill="#3b3b3b"/><rect x="966.15" y="215.40" width="5.95" height="1.1" fill="#a31515"/><rect x="972.10" y="215.40" width="0.85" height="1.1" fill="#3b3b3b"/><rect x="933.00" y="217.10" width="11.05" height="1.1" fill="#3b3b3b"/><rect x="944.05" y="217.10" width="0.85" height="1.1" fill="#0000ff"/><rect x="944.90" y="217.10" width="7.65" height="1.1" fill="#a31515"/><rect x="953.40" y="217.10" width="3.40" height="1.1" fill="#a31515"/><rect x="957.65" y="217.10" width="3.40" height="1.1" fill="#a31515"/><rect x="961.90" y="217.10" width="3.40" height="1.1" fill="#a31515"/><rect x="966.15" y="217.10" width="12.75" height="1.1" fill="#0000ff"/><rect x="978.90" y="217.10" width="0.85" height="1.1" fill="#a31515"/><rect x="979.75" y="217.10" width="0.85" height="1.1" fill="#3b3b3b"/><rect x="933.00" y="218.80" width="5.10" height="1.1" fill="#af00db"/><rect x="938.95" y="218.80" width="11.05" height="1.1" fill="#3b3b3b"/><rect x="926.20" y="220.50" width="5.10" height="1.1" fill="#af00db"/><rect x="932.15" y="220.50" width="18.70" height="1.1" fill="#3b3b3b"/><rect x="951.70" y="220.50" width="1.70" height="1.1" fill="#af00db"/><rect x="954.25" y="220.50" width="1.70" height="1.1" fill="#3b3b3b"/><rect x="929.60" y="222.20" width="11.05" height="1.1" fill="#3b3b3b"/><rect x="940.65" y="222.20" width="0.85" height="1.1" fill="#0000ff"/><rect x="941.50" y="222.20" width="8.50" height="1.1" fill="#a31515"/><rect x="950.85" y="222.20" width="1.70" height="1.1" fill="#a31515"/><rect x="953.40" y="222.20" width="5.10" height="1.1" fill="#a31515"/><rect x="959.35" y="222.20" width="3.40" height="1.1" fill="#a31515"/><rect x="963.60" y="222.20" width="3.40" height="1.1" fill="#a31515"/><rect x="967.85" y="222.20" width="3.40" height="1.1" fill="#a31515"/><rect x="972.10" y="222.20" width="3.40" height="1.1" fill="#a31515"/><rect x="976.35" y="222.20" width="4.25" height="1.1" fill="#a31515"/><rect x="981.45" y="222.20" width="6.80" height="1.1" fill="#0000ff"/><rect x="988.25" y="222.20" width="0.85" height="1.1" fill="#a31515"/><rect x="989.95" y="222.20" width="8.50" height="1.1" fill="#0000ff"/><rect x="998.45" y="222.20" width="0.85" height="1.1" fill="#a31515"/><rect x="926.20" y="223.90" width="5.10" height="1.1" fill="#af00db"/><rect x="932.15" y="223.90" width="7.65" height="1.1" fill="#3b3b3b"/><rect x="940.65" y="223.90" width="1.70" height="1.1" fill="#af00db"/><rect x="943.20" y="223.90" width="1.70" height="1.1" fill="#3b3b3b"/><rect x="929.60" y="225.60" width="11.05" height="1.1" fill="#3b3b3b"/><rect x="940.65" y="225.60" width="0.85" height="1.1" fill="#0000ff"/><rect x="941.50" y="225.60" width="5.95" height="1.1" fill="#a31515"/><rect x="948.30" y="225.60" width="1.70" height="1.1" fill="#a31515"/><rect x="950.85" y="225.60" width="3.40" height="1.1" fill="#a31515"/><rect x="955.10" y="225.60" width="5.10" height="1.1" fill="#a31515"/><rect x="961.05" y="225.60" width="3.40" height="1.1" fill="#a31515"/><rect x="965.30" y="225.60" width="3.40" height="1.1" fill="#a31515"/><rect x="969.55" y="225.60" width="3.40" height="1.1" fill="#a31515"/><rect x="973.80" y="225.60" width="5.10" height="1.1" fill="#a31515"/><rect x="979.75" y="225.60" width="2.55" height="1.1" fill="#0000ff"/><rect x="982.30" y="225.60" width="0.85" height="1.1" fill="#a31515"/><rect x="983.15" y="225.60" width="0.85" height="1.1" fill="#3b3b3b"/><rect x="926.20" y="229.00" width="5.10" height="1.1" fill="#af00db"/><rect x="932.15" y="229.00" width="1.70" height="1.1" fill="#a31515"/><rect x="922.80" y="234.10" width="0.85" height="1.1" fill="#008000"/><rect x="924.50" y="234.10" width="23.80" height="1.1" fill="#008000"/><rect x="922.80" y="235.80" width="0.85" height="1.1" fill="#008000"/><rect x="924.50" y="235.80" width="5.10" height="1.1" fill="#008000"/><rect x="930.45" y="235.80" width="5.95" height="1.1" fill="#008000"/><rect x="922.80" y="237.50" width="0.85" height="1.1" fill="#008000"/><rect x="924.50" y="237.50" width="23.80" height="1.1" fill="#008000"/><rect x="922.80" y="239.20" width="2.55" height="1.1" fill="#0000ff"/><rect x="926.20" y="239.20" width="11.90" height="1.1" fill="#795e26"/><rect x="938.10" y="239.20" width="0.85" height="1.1" fill="#0431fa"/><rect x="938.95" y="239.20" width="4.25" height="1.1" fill="#001080"/><rect x="943.20" y="239.20" width="0.85" height="1.1" fill="#3b3b3b"/><rect x="944.90" y="239.20" width="0.85" height="1.1" fill="#001080"/><rect x="945.75" y="239.20" width="0.85" height="1.1" fill="#0431fa"/><rect x="946.60" y="239.20" width="0.85" height="1.1" fill="#3b3b3b"/><rect x="926.20" y="242.60" width="7.65" height="1.1" fill="#a31515"/><rect x="934.70" y="242.60" width="8.50" height="1.1" fill="#a31515"/><rect x="926.20" y="244.30" width="5.95" height="1.1" fill="#a31515"/><rect x="933.00" y="244.30" width="4.25" height="1.1" fill="#a31515"/><rect x="938.10" y="244.30" width="3.40" height="1.1" fill="#a31515"/><rect x="942.35" y="244.30" width="10.20" height="1.1" fill="#a31515"/><rect x="953.40" y="244.30" width="7.65" height="1.1" fill="#a31515"/><rect x="961.90" y="244.30" width="2.55" height="1.1" fill="#a31515"/><rect x="965.30" y="244.30" width="8.50" height="1.1" fill="#a31515"/><rect x="974.65" y="244.30" width="7.65" height="1.1" fill="#a31515"/><rect x="983.15" y="244.30" width="10.20" height="1.1" fill="#a31515"/><rect x="926.20" y="247.70" width="11.05" height="1.1" fill="#3b3b3b"/><rect x="937.25" y="247.70" width="0.85" height="1.1" fill="#0000ff"/><rect x="938.10" y="247.70" width="12.75" height="1.1" fill="#a31515"/><rect x="951.70" y="247.70" width="5.10" height="1.1" fill="#a31515"/><rect x="957.65" y="247.70" width="5.95" height="1.1" fill="#0000ff"/><rect x="963.60" y="247.70" width="0.85" height="1.1" fill="#a31515"/><rect x="964.45" y="247.70" width="0.85" height="1.1" fill="#3b3b3b"/><rect x="926.20" y="251.10" width="10.20" height="1.1" fill="#3b3b3b"/><rect x="937.25" y="251.10" width="0.85" height="1.1" fill="#3b3b3b"/><rect x="938.95" y="251.10" width="8.50" height="1.1" fill="#3b3b3b"/><rect x="947.45" y="251.10" width="11.05" height="1.1" fill="#a31515"/><rect x="958.50" y="251.10" width="0.85" height="1.1" fill="#3b3b3b"/><rect x="926.20" y="252.80" width="6.80" height="1.1" fill="#3b3b3b"/><rect x="933.85" y="252.80" width="0.85" height="1.1" fill="#3b3b3b"/><rect x="935.55" y="252.80" width="7.65" height="1.1" fill="#3b3b3b"/><rect x="943.20" y="252.80" width="0.85" height="1.1" fill="#0431fa"/><rect x="944.05" y="252.80" width="8.50" height="1.1" fill="#a31515"/><rect x="952.55" y="252.80" width="0.85" height="1.1" fill="#0431fa"/><rect x="926.20" y="254.50" width="8.50" height="1.1" fill="#3b3b3b"/><rect x="935.55" y="254.50" width="0.85" height="1.1" fill="#3b3b3b"/><rect x="937.25" y="254.50" width="7.65" height="1.1" fill="#3b3b3b"/><rect x="944.90" y="254.50" width="0.85" height="1.1" fill="#0431fa"/><rect x="945.75" y="254.50" width="10.20" height="1.1" fill="#a31515"/><rect x="955.95" y="254.50" width="0.85" height="1.1" fill="#3b3b3b"/><rect x="957.65" y="254.50" width="1.70" height="1.1" fill="#319331"/><rect x="959.35" y="254.50" width="0.85" height="1.1" fill="#0431fa"/><rect x="926.20" y="257.90" width="0.85" height="1.1" fill="#008000"/><rect x="927.90" y="257.90" width="5.95" height="1.1" fill="#008000"/><rect x="934.70" y="257.90" width="10.20" height="1.1" fill="#008000"/><rect x="945.75" y="257.90" width="3.40" height="1.1" fill="#008000"/><rect x="950.00" y="257.90" width="8.50" height="1.1" fill="#008000"/><rect x="926.20" y="259.60" width="10.20" height="1.1" fill="#3b3b3b"/><rect x="937.25" y="259.60" width="0.85" height="1.1" fill="#3b3b3b"/><rect x="938.95" y="259.60" width="3.40" height="1.1" fill="#795e26"/><rect x="942.35" y="259.60" width="0.85" height="1.1" fill="#0431fa"/><rect x="929.60" y="261.30" width="0.85" height="1.1" fill="#319331"/><rect x="930.45" y="261.30" width="4.25" height="1.1" fill="#3b3b3b"/><rect x="934.70" y="261.30" width="0.85" height="1.1" fill="#7b3814"/><rect x="935.55" y="261.30" width="5.95" height="1.1" fill="#a31515"/><rect x="941.50" y="261.30" width="0.85" height="1.1" fill="#7b3814"/><rect x="943.20" y="261.30" width="2.55" height="1.1" fill="#af00db"/><rect x="946.60" y="261.30" width="4.25" height="1.1" fill="#3b3b3b"/><rect x="951.70" y="261.30" width="1.70" height="1.1" fill="#af00db"/><rect x="954.25" y="261.30" width="8.50" height="1.1" fill="#3b3b3b"/><rect x="963.60" y="261.30" width="1.70" height="1.1" fill="#af00db"/><rect x="966.15" y="261.30" width="7.65" height="1.1" fill="#3b3b3b"/><rect x="973.80" y="261.30" width="0.85" height="1.1" fill="#7b3814"/><rect x="974.65" y="261.30" width="5.10" height="1.1" fill="#a31515"/><rect x="979.75" y="261.30" width="0.85" height="1.1" fill="#7b3814"/><rect x="981.45" y="261.30" width="1.70" height="1.1" fill="#3b3b3b"/><rect x="984.00" y="261.30" width="11.90" height="1.1" fill="#a31515"/><rect x="995.90" y="261.30" width="0.85" height="1.1" fill="#319331"/><rect x="996.75" y="261.30" width="0.85" height="1.1" fill="#3b3b3b"/><rect x="929.60" y="263.00" width="3.40" height="1.1" fill="#0000ff"/><rect x="933.00" y="263.00" width="0.85" height="1.1" fill="#3b3b3b"/><rect x="926.20" y="264.70" width="0.85" height="1.1" fill="#0431fa"/><rect x="926.20" y="266.40" width="10.20" height="1.1" fill="#3b3b3b"/><rect x="936.40" y="266.40" width="0.85" height="1.1" fill="#0431fa"/><rect x="937.25" y="266.40" width="0.85" height="1.1" fill="#0000ff"/><rect x="938.10" y="266.40" width="5.10" height="1.1" fill="#a31515"/><rect x="944.05" y="266.40" width="5.10" height="1.1" fill="#a31515"/><rect x="950.00" y="266.40" width="5.10" height="1.1" fill="#a31515"/><rect x="955.95" y="266.40" width="0.85" height="1.1" fill="#319331"/><rect x="956.80" y="266.40" width="10.20" height="1.1" fill="#3b3b3b"/><rect x="967.00" y="266.40" width="0.85" height="1.1" fill="#319331"/><rect x="967.85" y="266.40" width="0.85" height="1.1" fill="#a31515"/><rect x="968.70" y="266.40" width="0.85" height="1.1" fill="#0431fa"/><rect x="926.20" y="269.80" width="7.65" height="1.1" fill="#3b3b3b"/><rect x="934.70" y="269.80" width="0.85" height="1.1" fill="#3b3b3b"/><rect x="936.40" y="269.80" width="16.15" height="1.1" fill="#3b3b3b"/><rect x="952.55" y="269.80" width="0.85" height="1.1" fill="#0431fa"/><rect x="953.40" y="269.80" width="10.20" height="1.1" fill="#3b3b3b"/><rect x="963.60" y="269.80" width="0.85" height="1.1" fill="#0431fa"/><rect x="965.30" y="269.80" width="1.70" height="1.1" fill="#af00db"/><rect x="967.85" y="269.80" width="10.20" height="1.1" fill="#3b3b3b"/><rect x="978.90" y="269.80" width="3.40" height="1.1" fill="#af00db"/><rect x="983.15" y="269.80" width="1.70" height="1.1" fill="#a31515"/><rect x="926.20" y="271.50" width="10.20" height="1.1" fill="#3b3b3b"/><rect x="936.40" y="271.50" width="0.85" height="1.1" fill="#0431fa"/><rect x="937.25" y="271.50" width="0.85" height="1.1" fill="#0000ff"/><rect x="938.10" y="271.50" width="5.95" height="1.1" fill="#a31515"/><rect x="944.90" y="271.50" width="4.25" height="1.1" fill="#a31515"/><rect x="950.00" y="271.50" width="6.80" height="1.1" fill="#a31515"/><rect x="957.65" y="271.50" width="0.85" height="1.1" fill="#319331"/><rect x="958.50" y="271.50" width="7.65" height="1.1" fill="#3b3b3b"/><rect x="966.15" y="271.50" width="0.85" height="1.1" fill="#319331"/><rect x="967.00" y="271.50" width="0.85" height="1.1" fill="#a31515"/><rect x="967.85" y="271.50" width="0.85" height="1.1" fill="#0431fa"/><rect x="926.20" y="274.90" width="0.85" height="1.1" fill="#008000"/><rect x="927.90" y="274.90" width="5.95" height="1.1" fill="#008000"/><rect x="934.70" y="274.90" width="2.55" height="1.1" fill="#008000"/><rect x="938.10" y="274.90" width="5.10" height="1.1" fill="#008000"/><rect x="944.05" y="274.90" width="6.80" height="1.1" fill="#008000"/><rect x="926.20" y="276.60" width="18.70" height="1.1" fill="#3b3b3b"/><rect x="945.75" y="276.60" width="0.85" height="1.1" fill="#3b3b3b"/><rect x="947.45" y="276.60" width="0.85" height="1.1" fill="#0431fa"/><rect x="948.30" y="276.60" width="5.10" height="1.1" fill="#a31515"/><rect x="953.40" y="276.60" width="0.85" height="1.1" fill="#3b3b3b"/><rect x="955.10" y="276.60" width="0.85" height="1.1" fill="#319331"/><rect x="955.95" y="276.60" width="5.10" height="1.1" fill="#a31515"/><rect x="961.05" y="276.60" width="0.85" height="1.1" fill="#3b3b3b"/><rect x="962.75" y="276.60" width="7.65" height="1.1" fill="#3b3b3b"/><rect x="970.40" y="276.60" width="0.85" height="1.1" fill="#319331"/><rect x="971.25" y="276.60" width="0.85" height="1.1" fill="#0431fa"/><rect x="926.20" y="280.00" width="12.75" height="1.1" fill="#3b3b3b"/><rect x="939.80" y="280.00" width="0.85" height="1.1" fill="#3b3b3b"/><rect x="941.50" y="280.00" width="0.85" height="1.1" fill="#0431fa"/><rect x="929.60" y="281.70" width="11.05" height="1.1" fill="#a31515"/><rect x="940.65" y="281.70" width="0.85" height="1.1" fill="#3b3b3b"/><rect x="942.35" y="281.70" width="11.05" height="1.1" fill="#3b3b3b"/><rect x="929.60" y="283.40" width="8.50" height="1.1" fill="#a31515"/><rect x="938.10" y="283.40" width="0.85" height="1.1" fill="#3b3b3b"/><rect x="939.80" y="283.40" width="7.65" height="1.1" fill="#3b3b3b"/><rect x="929.60" y="285.10" width="15.30" height="1.1" fill="#a31515"/><rect x="944.90" y="285.10" width="0.85" height="1.1" fill="#3b3b3b"/><rect x="946.60" y="285.10" width="0.85" height="1.1" fill="#319331"/><rect x="947.45" y="285.10" width="11.90" height="1.1" fill="#a31515"/><rect x="959.35" y="285.10" width="0.85" height="1.1" fill="#3b3b3b"/><rect x="961.05" y="285.10" width="18.70" height="1.1" fill="#3b3b3b"/><rect x="979.75" y="285.10" width="0.85" height="1.1" fill="#319331"/><rect x="980.60" y="285.10" width="0.85" height="1.1" fill="#3b3b3b"/><rect x="926.20" y="286.80" width="0.85" height="1.1" fill="#0431fa"/><rect x="926.20" y="290.20" width="6.80" height="1.1" fill="#3b3b3b"/><rect x="933.85" y="290.20" width="0.85" height="1.1" fill="#3b3b3b"/><rect x="935.55" y="290.20" width="0.85" height="1.1" fill="#0431fa"/><rect x="936.40" y="290.20" width="8.50" height="1.1" fill="#a31515"/><rect x="944.90" y="290.20" width="0.85" height="1.1" fill="#3b3b3b"/><rect x="946.60" y="290.20" width="13.60" height="1.1" fill="#3b3b3b"/><rect x="961.05" y="290.20" width="13.60" height="1.1" fill="#a31515"/><rect x="974.65" y="290.20" width="0.85" height="1.1" fill="#3b3b3b"/><rect x="976.35" y="290.20" width="7.65" height="1.1" fill="#3b3b3b"/><rect x="984.00" y="290.20" width="0.85" height="1.1" fill="#319331"/><rect x="984.85" y="290.20" width="13.60" height="1.1" fill="#a31515"/><rect x="998.45" y="290.20" width="0.85" height="1.1" fill="#319331"/><rect x="999.30" y="290.20" width="0.20" height="1.1" fill="#0431fa"/><rect x="926.20" y="293.60" width="10.20" height="1.1" fill="#3b3b3b"/><rect x="936.40" y="293.60" width="0.85" height="1.1" fill="#0431fa"/><rect x="937.25" y="293.60" width="0.85" height="1.1" fill="#0000ff"/><rect x="938.10" y="293.60" width="12.75" height="1.1" fill="#a31515"/><rect x="951.70" y="293.60" width="7.65" height="1.1" fill="#a31515"/><rect x="960.20" y="293.60" width="0.85" height="1.1" fill="#319331"/><rect x="961.05" y="293.60" width="6.80" height="1.1" fill="#3b3b3b"/><rect x="967.85" y="293.60" width="0.85" height="1.1" fill="#319331"/><rect x="968.70" y="293.60" width="0.85" height="1.1" fill="#a31515"/><rect x="969.55" y="293.60" width="0.85" height="1.1" fill="#0431fa"/><rect x="926.20" y="297.00" width="5.10" height="1.1" fill="#af00db"/><rect x="932.15" y="297.00" width="6.80" height="1.1" fill="#3b3b3b"/></g></svg>

<svg width="0" height="0" style="position:absolute">
  <defs>
    <g id="py">
      <path id="pyh" d="M2.7 0.4h3.7a0.9 0.9 0 0 1 0.9 0.9v2.7a0.9 0.9 0 0 1-0.9 0.9H3.6a0.9 0.9 0 0 0-0.9 0.9v1.5H1.2a0.9 0.9 0 0 1-0.9-0.9V4.3a0.9 0.9 0 0 1 0.9-0.9h4.2V2.9H2.7z" fill="#3b8bbd"/>
      <use href="#pyh" transform="rotate(180 5 5)"/>
    </g>
  </defs>
</svg>
</body></html>
